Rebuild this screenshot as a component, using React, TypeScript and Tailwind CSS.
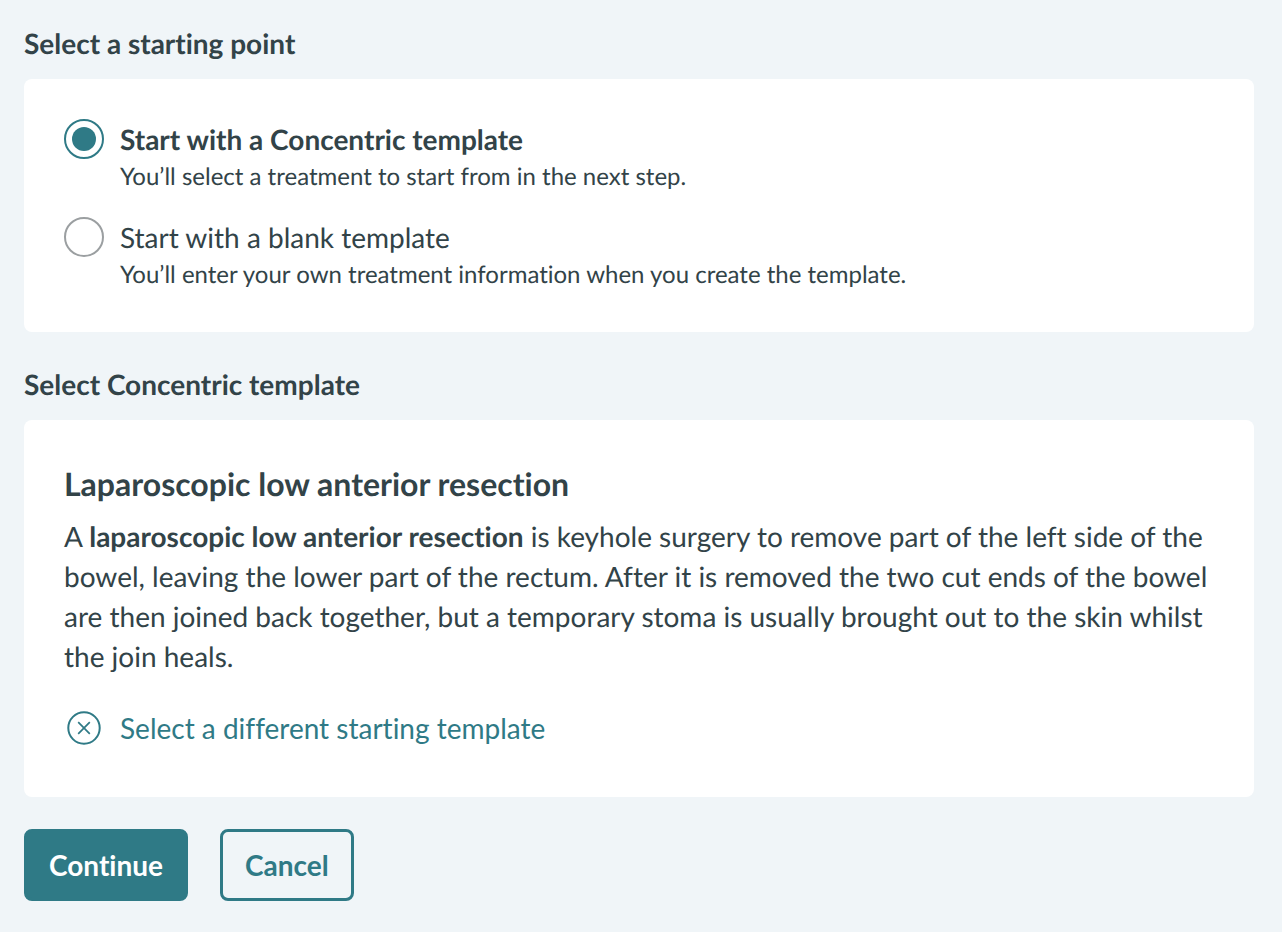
import React from 'react';

const STARTING_POINTS = [
  {
    id: 'concentric',
    label: 'Start with a Concentric template',
    hint: 'You’ll select a treatment to start from in the next step.',
  },
  {
    id: 'blank',
    label: 'Start with a blank template',
    hint: 'You’ll enter your own treatment information when you create the template.',
  },
];

const App: React.FC = () => {
  const [selected, setSelected] = React.useState('concentric');

  return (
    <main className="min-h-screen bg-[#f0f5f8] pl-6 pr-7 pt-[23px] pb-7 font-['Lato',sans-serif] text-[28px] leading-10 text-[#324348] antialiased [font-variant-ligatures:none] [text-rendering:geometricPrecision]">
      <form onSubmit={(e) => e.preventDefault()}>
        <fieldset>
          <legend className="font-bold">Select a starting point</legend>
          <div className="mt-4 rounded-lg bg-white px-10 pt-10 pb-[39px]">
            <div className="space-y-[22px]">
              {STARTING_POINTS.map((point) => (
                <div key={point.id} className="flex gap-4">
                  <input
                    type="radio"
                    name="starting-point"
                    id={point.id}
                    aria-describedby={`${point.id}-hint`}
                    checked={selected === point.id}
                    onChange={() => setSelected(point.id)}
                    className="peer grid size-10 shrink-0 appearance-none place-items-center rounded-full border-2 border-[#9b9fa1] bg-white before:size-6 before:rounded-full checked:border-[#2f7a86] checked:before:bg-[#2f7a86]"
                  />
                  <div className="peer-checked:[&>label]:font-bold">
                    <label htmlFor={point.id} className="block">{point.label}</label>
                    <p id={`${point.id}-hint`} className="text-2xl leading-9">{point.hint}</p>
                  </div>
                </div>
              ))}
            </div>
          </div>
        </fieldset>

        <section className="mt-8">
          <h2 className="font-bold">Select Concentric template</h2>
          <div className="mt-4 rounded-lg bg-white px-10 pt-10 pb-[49px]">
            <h3 className="text-[32px] font-bold leading-[48px]">Laparoscopic low anterior resection</h3>
            <p className="mt-2">
              A <strong className="font-bold">laparoscopic low anterior resection</strong> is keyhole surgery to remove part of the left side of the bowel, leaving the lower part of the rectum. After it is removed the two cut ends of the bowel are then joined back together, but a temporary stoma is usually brought out to the skin whilst the join heals.
            </p>
            <button type="button" className="mt-8 flex items-center gap-4 text-[#2f7a86]">
              <svg viewBox="0 0 40 40" className="size-10" fill="none" stroke="currentColor" strokeWidth="2" aria-hidden="true">
                <circle cx="20" cy="20" r="15.7" />
                <path d="M14.2 14.2 25.8 25.8M25.8 14.2 14.2 25.8" strokeWidth="1.7" />
              </svg>
              Select a different starting template
            </button>
          </div>
        </section>

        <div className="mt-8 flex gap-8">
          <button type="submit" className="rounded-lg border-3 border-[#2f7a86] bg-[#2f7a86] px-[22px] py-[13px] font-bold text-white">
            Continue
          </button>
          <button type="button" className="rounded-lg border-3 border-[#2f7a86] px-[22px] py-[13px] font-bold text-[#2f7a86]">
            Cancel
          </button>
        </div>
      </form>
    </main>
  );
};

export default App;
